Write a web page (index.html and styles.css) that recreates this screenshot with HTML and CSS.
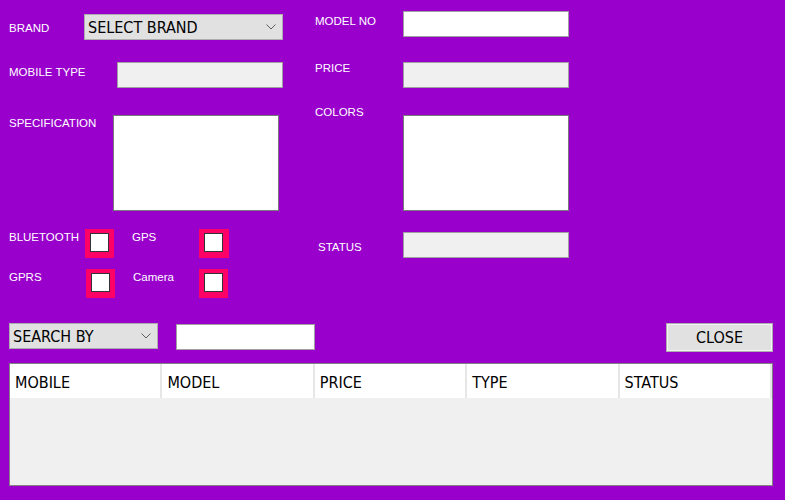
FILE: index.html
```html
<!DOCTYPE html>
<html>
<head>
<meta charset="utf-8">
<link rel="stylesheet" href="styles.css">
</head>
<body>
<div class="page">
  <div class="top">
    <div class="col col-left">
      <div class="row row-brand">
        <span class="lbl lbl-brand">BRAND</span>
        <div class="combo combo-brand"><span>SELECT BRAND</span><svg class="chev" width="10" height="6" viewBox="0 0 10 6"><polyline points="0.5,0.5 5,5 9.5,0.5" fill="none" stroke="#606060" stroke-width="1"/></svg></div>
      </div>
      <div class="row row-type">
        <span class="lbl lbl-type">MOBILE TYPE</span>
        <div class="field field-grey w166"></div>
      </div>
      <div class="row row-spec">
        <span class="lbl lbl-spec">SPECIFICATION</span>
        <div class="area"></div>
      </div>
      <div class="row row-chk1">
        <span class="lbl lbl-bt">BLUETOOTH</span>
        <div class="chk"><div class="box"></div></div>
        <span class="lbl lbl-gps">GPS</span>
        <div class="chk chk-b"><div class="box"></div></div>
      </div>
      <div class="row row-chk2">
        <span class="lbl lbl-gprs">GPRS</span>
        <div class="chk"><div class="box"></div></div>
        <span class="lbl lbl-cam">Camera</span>
        <div class="chk"><div class="box"></div></div>
      </div>
    </div>
    <div class="col col-right">
      <div class="row row-model">
        <span class="lbl lbl-r lbl-model">MODEL NO</span>
        <div class="field field-white w166"></div>
      </div>
      <div class="row row-price">
        <span class="lbl lbl-r lbl-price">PRICE</span>
        <div class="field field-grey w166"></div>
      </div>
      <div class="row row-colors">
        <span class="lbl lbl-r lbl-colors">COLORS</span>
        <div class="area area-colors"></div>
      </div>
      <div class="row row-status">
        <span class="lbl lbl-r lbl-status">STATUS</span>
        <div class="field field-grey w166"></div>
      </div>
    </div>
  </div>

  <div class="search">
    <div class="combo combo-search"><span>SEARCH BY</span><svg class="chev" width="10" height="6" viewBox="0 0 10 6"><polyline points="0.5,0.5 5,5 9.5,0.5" fill="none" stroke="#606060" stroke-width="1"/></svg></div>
    <div class="field field-white search-input"></div>
    <div class="btn">CLOSE</div>
  </div>

  <div class="grid">
    <div class="head">
      <div class="hcell">MOBILE</div>
      <div class="hcell">MODEL</div>
      <div class="hcell">PRICE</div>
      <div class="hcell">TYPE</div>
      <div class="hcell">STATUS</div>
    </div>
  </div>
</div>
</body>
</html>
```

FILE: styles.css
```css
html, body {
  margin: 0;
  padding: 0;
  background: #9900cc;
  width: 785px;
  height: 500px;
  overflow: hidden;
}

.page {
  padding: 0 12px 0 9px;
  font-family: "DejaVu Sans Condensed", "DejaVu Sans", sans-serif;
  font-stretch: condensed;
}

.top {
  display: flex;
}

.col-left {
  width: 306px;
}

.row {
  display: flex;
  align-items: flex-start;
}

.lbl {
  color: #ffffff;
  font-family: "Liberation Sans", Arial, sans-serif;
  font-stretch: normal;
  font-size: 11.5px;
  line-height: 16px;
  flex: none;
  white-space: nowrap;
}

/* left column */
.row-brand { margin-top: 14px; }
.lbl-brand { width: 75px; line-height: 26px; padding-top: 1px; height: 25px; }

.row-type { margin-top: 22px; }
.lbl-type { width: 108px; padding-top: 2px; }

.row-spec { margin-top: 27px; }
.lbl-spec { width: 104px; padding-top: 0; }

.row-chk1 { margin-top: 18px; }
.lbl-bt { width: 76px; }
.lbl-gps { width: 67px; margin-left: 18px; }

.row-chk2 { margin-top: 11px; }
.lbl-gprs { width: 77px; }
.lbl-cam { width: 66px; margin-left: 18px; }

.chk {
  width: 29px;
  height: 29px;
  background: #ff0066;
  padding: 4px 5px 6px 5px;
  box-sizing: border-box;
  flex: none;
}
.chk-b { width: 30px; }

.box {
  width: 19px;
  height: 19px;
  box-sizing: border-box;
  background: #ffffff;
  border: 1px solid #333333;
}

/* right column */
.lbl-r { width: 88px; }

.row-model { margin-top: 11px; }
.lbl-model { padding-top: 2px; }

.row-price { margin-top: 25px; }
.lbl-price { line-height: 12px; }

.row-colors { margin-top: 16px; }
.area-colors { margin-top: 11px; }

.row-status { margin-top: 21px; }
.lbl-status { padding: 7px 0 0 3px; width: 85px; }

/* controls */
.combo {
  height: 26px;
  box-sizing: border-box;
  background: #e1e1e1;
  border: 1px solid #adadad;
  display: flex;
  align-items: center;
  justify-content: space-between;
  padding: 0 6px 0 3px;
  font-size: 16px;
  color: #000000;
  flex: none;
}
.combo-brand { width: 199px; }
.combo-search { width: 149px; }
.chev { display: block; }

.field {
  height: 26px;
  box-sizing: border-box;
  border: 1px solid #a0a0a0;
  flex: none;
}
.field-white { background: #ffffff; }
.field-grey { background: #f0f0f0; }
.w166 { width: 166px; }

.area {
  width: 166px;
  height: 96px;
  box-sizing: border-box;
  background: #ffffff;
  border: 1px solid #7a7a7a;
  flex: none;
}

/* search row */
.search {
  display: flex;
  align-items: flex-start;
  margin-top: 25px;
}
.search-input {
  width: 139px;
  margin-left: 18px;
  margin-top: 1px;
}
.btn {
  margin-left: auto;
  width: 107px;
  height: 29px;
  box-sizing: border-box;
  background: #e1e1e1;
  border: 1px solid #adadad;
  box-shadow: inset 0 0 0 1px #f4f4f4;
  font-size: 16px;
  line-height: 27px;
  text-align: center;
  color: #000000;
}

/* data grid */
.grid {
  margin-top: 11px;
  height: 123px;
  box-sizing: border-box;
  border: 1px solid #828282;
  background: #f0f0f0;
}
.head {
  display: grid;
  grid-template-columns: repeat(5, 1fr);
  height: 34px;
  background: #ffffff;
}
.hcell {
  font-size: 16px;
  line-height: 30px;
  padding-top: 4px;
  padding-left: 5px;
  color: #000000;
  border-right: 2px solid #e6e6e6;
}
```
